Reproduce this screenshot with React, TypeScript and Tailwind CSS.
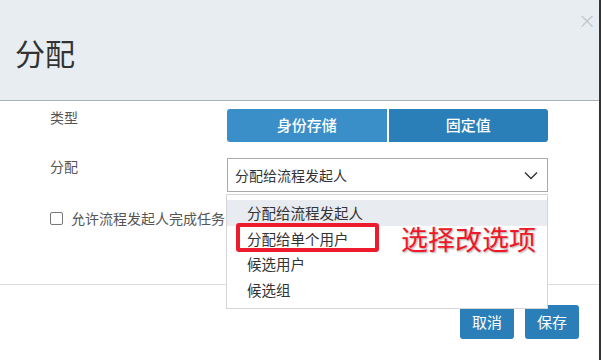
import { useState } from "react";

const font = "font-['Noto_Sans_CJK_SC','Noto_Sans',sans-serif]";

const options = ["分配给流程发起人", "分配给单个用户", "候选用户", "候选组"];

export default function App() {
  const [type, setType] = useState("身份存储");
  const [allow, setAllow] = useState(false);

  return (
    <div className={`${font} w-[601px] h-[360px] bg-white border-r-2 border-[#333] overflow-hidden relative`}>
      {/* 标题栏 */}
      <div className="relative h-[101px] bg-[#e8edf1] border-b border-[#aab1b7] pl-[15px] pt-[32px]">
        <h1 className="text-[30px] leading-[40px] font-normal text-[#333]">分配</h1>
        <button className="absolute right-[3px] top-[11px] text-[18px] leading-none text-[#c2c6ca]">×</button>
      </div>

      {/* 表单 */}
      <div className="h-[183px] pt-[8px] pl-[50px] text-[14px] text-[#555]">
        <div className="flex">
          <div className="w-[177px] mt-[-2px] leading-[20px]">类型</div>
          <div className="flex w-[321px] h-[33px] gap-[2px]">
            {["身份存储", "固定值"].map((t, i) => (
              <button
                key={t}
                onClick={() => setType(t)}
                className={`flex-1 text-white text-[15px] font-medium ${
                  i === 0 ? "rounded-l-[3px] bg-[#3a8fc9]" : "rounded-r-[3px] bg-[#2b7fb8]"
                }`}
              >
                {t}
              </button>
            ))}
          </div>
        </div>

        <div className="flex mt-[16px]">
          <div className="w-[177px] mt-[-2px] leading-[20px]">分配</div>
          <div className="relative w-[321px]">
            <div className="h-[34px] border border-[#aaa] flex items-center justify-between pl-[7px] pr-[9px] text-[#333]">
              <span>分配给流程发起人</span>
              <svg width="14" height="9" viewBox="0 0 14 9" fill="none">
                <path d="M1 1.5 L7 7.5 L13 1.5" stroke="#333" strokeWidth="1.4" />
              </svg>
            </div>

            {/* 下拉列表 */}
            <div className="absolute z-10 left-[-1px] top-[36px] w-[322px] h-[115px] bg-white border border-[#d6d6d6] pt-[5px] text-[14.5px] text-[#333]">
              {options.map((o, i) => (
                <div
                  key={o}
                  className={`h-[25.5px] leading-[25.5px] pl-[20px] ${i === 0 ? "bg-[#e8ecf0]" : ""}`}
                >
                  {o}
                </div>
              ))}
              <div className="absolute left-[9px] top-[28px] w-[143px] h-[29px] border-4 border-[#ec1c2c] rounded-[3px]" />
              <div className="absolute left-[174px] top-[28px] text-[27px] leading-[32px] text-[#f01828] [-webkit-text-stroke:3px_white] [paint-order:stroke_fill] [text-shadow:1px_1px_2px_rgba(0,0,0,0.35)]">
                选择改选项
              </div>
            </div>
          </div>
        </div>

        <label className="flex items-center mt-[16px] h-[20px]">
          <input
            type="checkbox"
            checked={allow}
            onChange={(e) => setAllow(e.target.checked)}
            className="appearance-none w-[13px] h-[13px] border border-[#777] rounded-[2px] bg-white"
          />
          <span className="ml-[8px]">允许流程发起人完成任务</span>
        </label>
      </div>

      {/* 底部按钮 */}
      <div className="border-t border-[#ddd] flex justify-end gap-[11px] pt-[20px] pr-[20px]">
        <button className="w-[54px] h-[34px] rounded-[3px] bg-[#2b7fb8] text-white text-[15px]">取消</button>
        <button className="w-[54px] h-[34px] rounded-[3px] bg-[#2b7fb8] text-white text-[15px]">保存</button>
      </div>
    </div>
  );
}
